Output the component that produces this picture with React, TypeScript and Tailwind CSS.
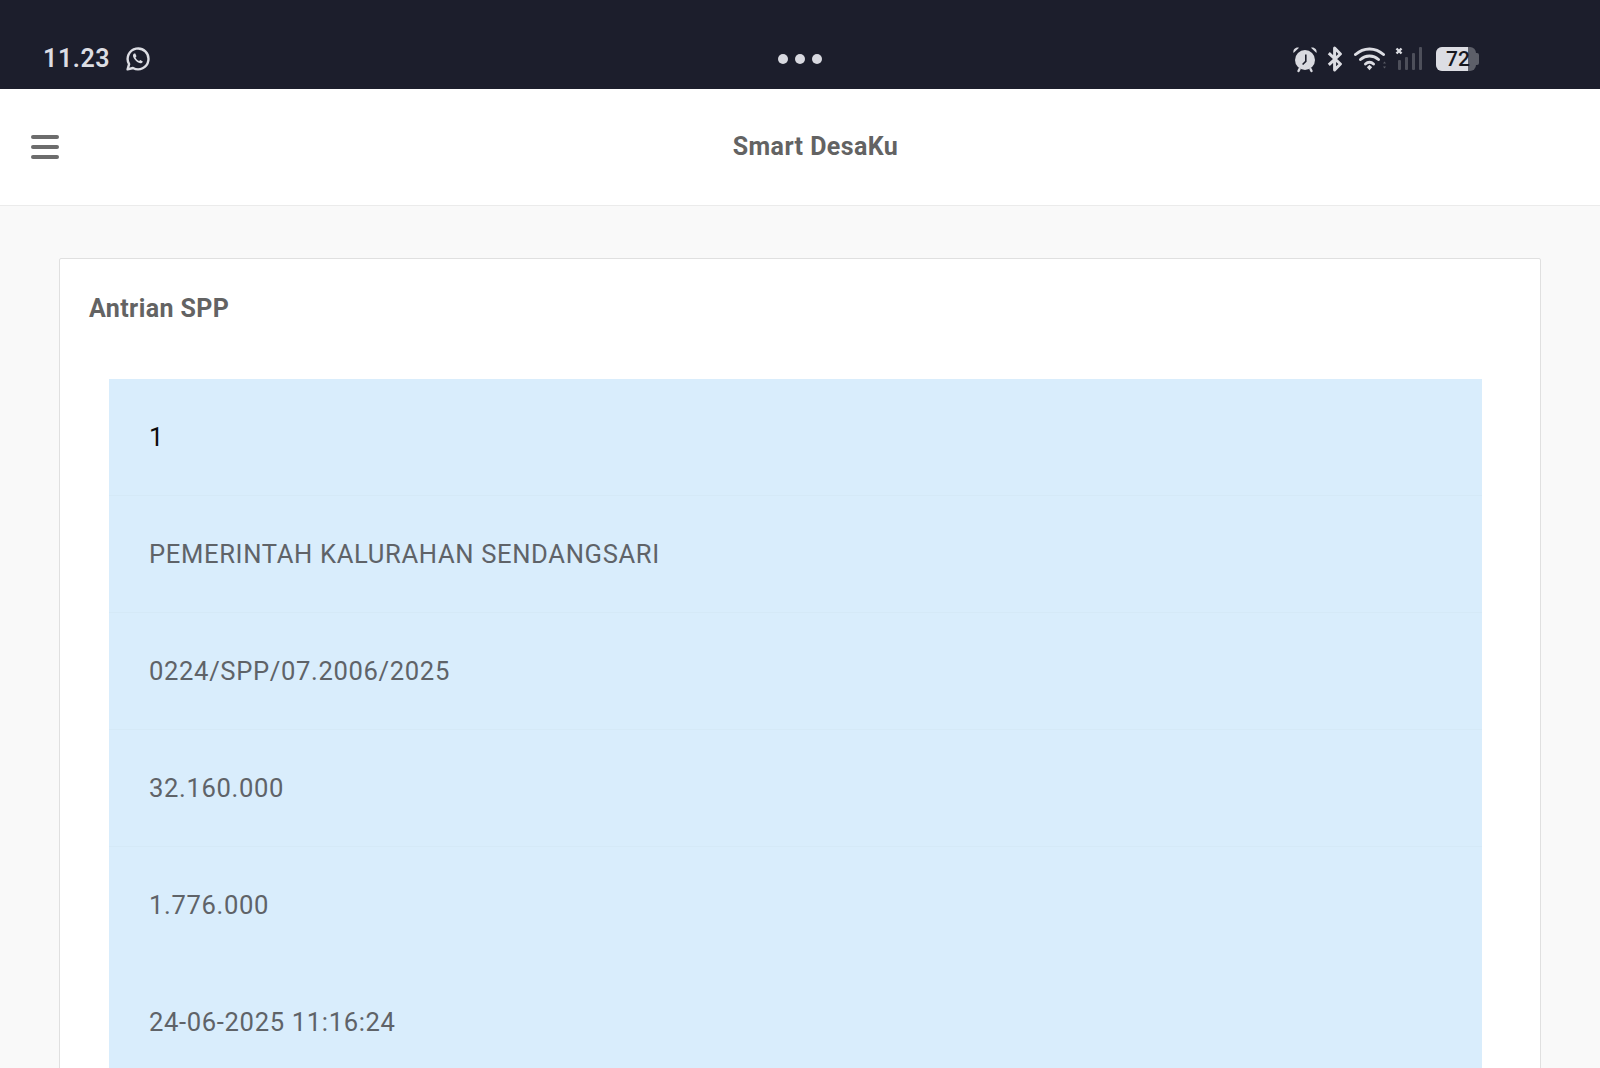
import React from "react";

const rows = [
  { t: "1", c: "text-[#0b0b0b]", b: "border-b border-[#d5e9f7]" },
  { t: "PEMERINTAH KALURAHAN SENDANGSARI", c: "text-[#5f6368]", b: "border-b border-[#d5e9f7]" },
  { t: "0224/SPP/07.2006/2025", c: "text-[#5f6368]", b: "border-b border-[#d5e9f7]" },
  { t: "32.160.000", c: "text-[#5f6368]", b: "border-b border-[#d5e9f7]" },
  { t: "1.776.000", c: "text-[#5f6368]", b: "border-b border-[#d9edfc]" },
  { t: "24-06-2025 11:16:24", c: "text-[#5f6368]", b: "" },
];

function Whatsapp() {
  return (
    <svg width="26" height="26" viewBox="0 0 26 26" fill="none" stroke="#dcdde3" strokeWidth="2.4">
      <path d="M2.6 23.4l1.5-5.2A10.4 10.4 0 1 1 8 22z" strokeLinejoin="round" />
      <path d="M9 7.6c-1.4 1-1.4 3 .2 5.2 1.8 2.6 4.2 4.4 6.2 4.4 1.3 0 2.2-.8 2.4-1.8l-2.5-1.4-1.2 1.1c-1.5-.7-2.8-2-3.600-3.600l1-1.200L10.300 7.600z" fill="#dcdde3" stroke="none" />
    </svg>
  );
}

function Alarm() {
  return (
    <svg width="26" height="28" viewBox="0 0 26 28">
      <circle cx="13" cy="15" r="10" fill="#d9dae0" />
      <path d="M1.500 8 7 2.800C4 1.800.6 4.400 1.500 8zM24.500 8 19 2.800c3-1 6.400 1.600 5.500 5.200z" fill="#d9dae0" />
      <path d="M7.500 24 6.500 26M18.500 24l1 2" stroke="#d9dae0" strokeWidth="2.400" strokeLinecap="round" />
      <path d="M13.800 9.500v6.800L10.600 19.500" stroke="#1c1e2c" strokeWidth="1.600" fill="none" />
    </svg>
  );
}

function Bluetooth() {
  return (
    <svg width="16" height="26" viewBox="0 0 16 26" fill="none" stroke="#dcdde3" strokeWidth="3">
      <path d="M1.800 7.200 13.400 18 7.600 24V2l5.800 6L1.800 18.800" strokeLinejoin="round" />
    </svg>
  );
}

function Wifi() {
  return (
    <svg width="34" height="26" viewBox="0 0 34 26" fill="none">
      <path d="M1.500 8.500C9.500 1 21.500 1 29.500 8.500" stroke="#dcdde3" strokeWidth="3" strokeLinecap="round" />
      <path d="M6.500 13.500c5-4.600 13-4.600 18 0" stroke="#dcdde3" strokeWidth="3" strokeLinecap="round" />
      <path d="M11.500 18c2.400-2.200 5.600-2.200 8 0" stroke="#dcdde3" strokeWidth="3" strokeLinecap="round" />
      <path d="M12.800 21.200 15.500 18.800l2.700 2.400-2.700 3z" fill="#dcdde3" />
      <path d="M29 17.500h3l-1.500-2zM29 20.500h3l-1.500 2z" fill="#5a5c66" />
    </svg>
  );
}

function Signal() {
  return (
    <svg width="28" height="26" viewBox="0 0 28 26" fill="none">
      <path d="M1.500 2.500 6.500 7.500M6.500 2.500 1.500 7.500" stroke="#dcdde3" strokeWidth="2.400" />
      <rect x="3" y="14" width="3" height="10" rx="1" fill="#4d4f5a" />
      <rect x="10" y="11" width="3" height="13" rx="1" fill="#4d4f5a" />
      <rect x="17" y="7" width="3" height="17" rx="1" fill="#4d4f5a" />
      <rect x="24" y="1" width="3" height="23" rx="1" fill="#4d4f5a" />
    </svg>
  );
}

export default function App() {
  return (
    <div className="h-[1068px] overflow-hidden bg-[#f9f9f9] font-['Roboto',sans-serif]">
      <div className="h-[89px] bg-[#1c1e2c] flex items-end pb-[16px] pl-[43px] pr-[121px] justify-between">
        <div className="flex items-center gap-[15px] w-[300px]">
          <span className="text-[25px] leading-[28px] font-semibold text-[#dcdde3] tracking-[0.6px]">11.23</span>
          <Whatsapp />
        </div>
        <div className="flex items-center gap-[7px] h-[28px] mr-[35px]">
          <span className="w-[10px] h-[10px] rounded-full bg-[#d8d9e0]" />
          <span className="w-[10px] h-[10px] rounded-full bg-[#d8d9e0]" />
          <span className="w-[10px] h-[10px] rounded-full bg-[#d8d9e0]" />
        </div>
        <div className="flex items-center">
          <Alarm />
          <span className="ml-[9px]"><Bluetooth /></span>
          <span className="ml-[11px]"><Wifi /></span>
          <span className="ml-[7px]"><Signal /></span>
          <div className="ml-[13px] flex items-center">
            <div className="w-[40px] h-[24px] rounded-[6px] bg-[#5d5f69] overflow-hidden relative flex items-center">
              <div className="w-[32px] h-full bg-[#dcdde3]" />
              <span className="absolute left-[10px] top-0 text-[21px] leading-[24px] font-medium text-[#17181f]">72</span>
            </div>
            <div className="w-[3px] h-[12px] rounded-r-[2px] bg-[#5d5f69]" />
          </div>
        </div>
      </div>

      <div className="h-[117px] bg-white border-b border-[#ebebeb] flex items-center justify-center pl-[31px] relative">
        <div className="absolute left-[31px] top-[46px] w-[28px] flex flex-col gap-[6px]">
          <span className="h-[4px] rounded-full bg-[#6c6c6c]" />
          <span className="h-[4px] rounded-full bg-[#6c6c6c]" />
          <span className="h-[4px] rounded-full bg-[#6c6c6c]" />
        </div>
        <span className="text-[25px] font-bold text-[#636363] leading-[30px] tracking-[0.43px]">Smart DesaKu</span>
      </div>

      <div className="pt-[52px] px-[59px]">
        <div className="bg-white border border-[#e0e0e0] rounded-[2px] h-[900px]">
          <h2 className="pl-[29px] pt-[35px] text-[25px] leading-[30px] font-bold text-[#636363] tracking-[0.4px]">Antrian SPP</h2>
          <div className="mt-[55px] ml-[49px] mr-[58px] bg-[#d9edfc]">
            {rows.map((r, i) => (
              <div
                key={i}
                className={`h-[117px] flex items-center pl-[40px] text-[25.6px] tracking-[0.65px] ${r.b} ${r.c}`}
              >
                {r.t}
              </div>
            ))}
          </div>
        </div>
      </div>
    </div>
  );
}
